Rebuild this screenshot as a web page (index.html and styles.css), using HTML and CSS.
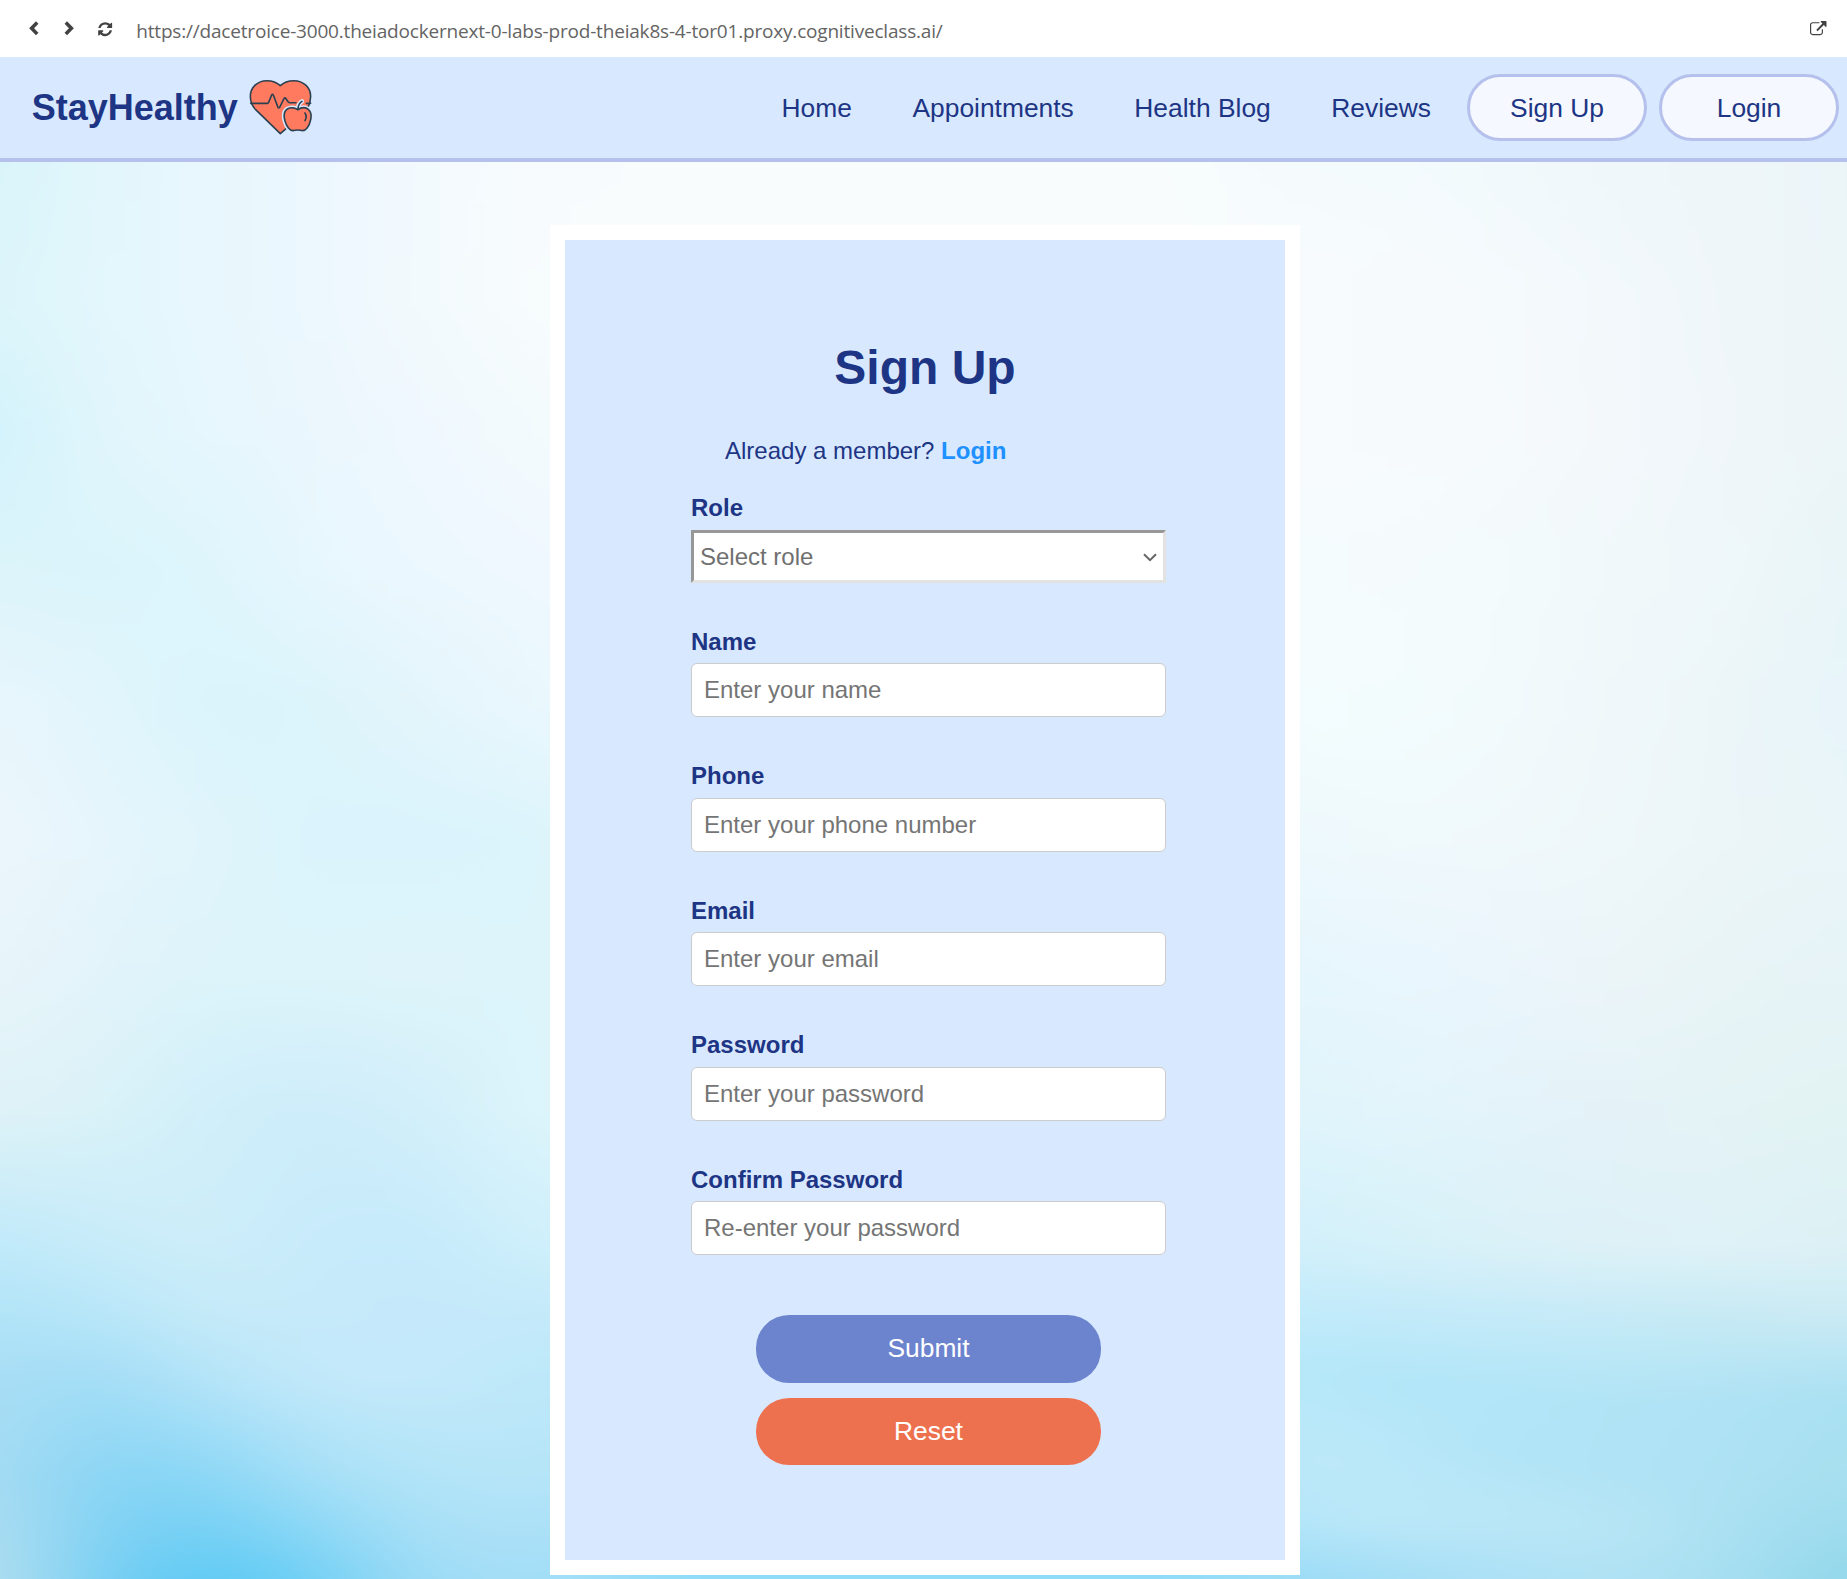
FILE: index.html
```html
<!DOCTYPE html>
<html lang="en">
<head>
<meta charset="utf-8">
<title>StayHealthy - Sign Up</title>
<link rel="stylesheet" href="styles.css">
</head>
<body>
<div class="toolbar">
  <svg class="tool tool-back" viewBox="0 0 10 15"><path d="M8.2 1.6 2.6 7.3l5.6 5.7" fill="none" stroke="#424242" stroke-width="3.5"/></svg>
  <svg class="tool tool-forward" viewBox="0 0 10 15"><path d="M1.8 1.6 7.4 7.3 1.8 13" fill="none" stroke="#424242" stroke-width="3.5"/></svg>
  <svg class="tool tool-refresh" viewBox="0 0 1792 1792"><path fill="#424242" d="M1639 1056q0 5-1 7-64 268-268 434.5t-478 166.5q-146 0-282.5-55t-243.5-157l-129 129q-19 19-45 19t-45-19-19-45v-448q0-26 19-45t45-19h448q26 0 45 19t19 45-19 45l-137 137q71 66 161 102t187 36q134 0 250-65t186-179q11-17 53-117 8-23 30-23h192q13 0 22.5 9.5t9.5 22.5zm25-800v448q0 26-19 45t-45 19h-448q-26 0-45-19t-19-45 19-45l138-138q-148-137-349-137-134 0-250 65t-186 179q-11 17-53 117-8 23-30 23h-199q-13 0-22.5-9.5t-9.5-22.5v-7q65-268 270-434.5t480-166.5q146 0 284 55.5t245 156.5l130-129q19-19 45-19t45 19 19 45z"/></svg>
  <span class="url">https://dacetroice-3000.theiadockernext-0-labs-prod-theiak8s-4-tor01.proxy.cognitiveclass.ai/</span>
  <svg class="tool tool-open" viewBox="0 0 1792 1792"><path fill="#424242" d="M1408 928v320q0 119-84.5 203.5t-203.5 84.5h-832q-119 0-203.5-84.5t-84.5-203.5v-832q0-119 84.5-203.5t203.5-84.5h704q14 0 23 9t9 23v64q0 14-9 23t-23 9h-704q-66 0-113 47t-47 113v832q0 66 47 113t113 47h832q66 0 113-47t47-113v-320q0-14 9-23t23-9h64q14 0 23 9t9 23zm384-864v512q0 26-19 45t-45 19-45-19l-176-176-652 652q-10 10-23 10t-23-10l-114-114q-10-10-10-23t10-23l652-652-176-176q-19-19-19-45t19-45 45-19h512q26 0 45 19t19 45z"/></svg>
</div>

<nav class="navbar">
  <a class="brand">StayHealthy
    <svg class="brand-icon" viewBox="56 42 190 170" fill="#ff7a5e" stroke="#2b4152" stroke-width="4.8" stroke-linejoin="round" stroke-linecap="round">
      <path d="M150 206 76 134C62 120 60 106 60 94 60 67 82 47 109 47c17 0 32 6 41 15 9-9 23-15 41-15 28 0 50 20 50 47 0 12-2 22-8 34l-62 60Z"/>
      <path fill="none" d="M61 115h50q3 0 4-3l9-22q3-4 5 0l14 37q2 4 5 0l13-26q3-5 6 0l7 10q2 2 5 2h18"/>
      <path stroke="#d8e9ff" fill="#d8e9ff" stroke-width="14" d="M203 134c-8-6-22-8-32-2-10 7-11 22-7 36 4 15 14 29 24 29 6 0 8-2 14-2s9 2 15 2c10 0 20-14 23-29 4-14 2-29-7-36-10-6-22-4-30 2Z"/>
      <path stroke="#d8e9ff" fill="none" stroke-width="13" d="M203 134q0-18 12-25"/>
      <path d="M203 134c-8-6-22-8-32-2-10 7-11 22-7 36 4 15 14 29 24 29 6 0 8-2 14-2s9 2 15 2c10 0 20-14 23-29 4-14 2-29-7-36-10-6-22-4-30 2Z"/>
      <path fill="none" d="M203 134q0-18 12-25M228 115h13M224 144q7 11 0 23"/>
    </svg>
  </a>
  <div class="links">
    <a class="link">Home</a>
    <a class="link">Appointments</a>
    <a class="link">Health Blog</a>
    <a class="link">Reviews</a>
  </div>
  <div class="nav-buttons">
    <button class="nav-button">Sign Up</button>
    <button class="nav-button">Login</button>
  </div>
</nav>

<main class="page">
  <svg class="backdrop" width="1847" height="1417" viewBox="0 162 1847 1417">
    <defs>
      <filter id="melt" filterUnits="userSpaceOnUse" x="-250" y="60" width="2350" height="1620" color-interpolation-filters="sRGB"><feGaussianBlur stdDeviation="56 10"/></filter>
      <linearGradient id="c1" gradientUnits="userSpaceOnUse" x1="0" y1="160" x2="0" y2="1579"><stop offset="0" stop-color="#d8f5f9"/><stop offset=".096" stop-color="#dcf5fa"/><stop offset=".19" stop-color="#d2f2fc"/><stop offset=".287" stop-color="#dcf4fa"/><stop offset=".383" stop-color="#e8f6fc"/><stop offset=".478" stop-color="#ecf6fc"/><stop offset=".574" stop-color="#e8f5fa"/><stop offset=".67" stop-color="#dff2f7"/><stop offset=".765" stop-color="#bfe9fa"/><stop offset=".81" stop-color="#b2e4f7"/><stop offset=".861" stop-color="#a8def5"/><stop offset=".925" stop-color="#a6dbf2"/><stop offset="1" stop-color="#b2dff0"/></linearGradient>
      <linearGradient id="c2" href="#c1"><stop offset="0" stop-color="#e3f6fc"/><stop offset=".096" stop-color="#e3f7fc"/><stop offset=".19" stop-color="#e2f6fb"/><stop offset=".287" stop-color="#daf4fb"/><stop offset=".383" stop-color="#e2f5fc"/><stop offset=".478" stop-color="#e6f5fc"/><stop offset=".574" stop-color="#e2f3fa"/><stop offset=".67" stop-color="#daf2f8"/><stop offset=".765" stop-color="#c8ecf9"/><stop offset=".81" stop-color="#b8e7f9"/><stop offset=".861" stop-color="#a0dcf6"/><stop offset=".925" stop-color="#88d5f5"/><stop offset="1" stop-color="#77cef3"/></linearGradient>
      <linearGradient id="c3" href="#c1"><stop offset="0" stop-color="#e8f7fd"/><stop offset=".096" stop-color="#e8f7fd"/><stop offset=".19" stop-color="#e6f7fe"/><stop offset=".287" stop-color="#def5fc"/><stop offset=".383" stop-color="#d9f4fc"/><stop offset=".478" stop-color="#e0f5fb"/><stop offset=".574" stop-color="#dcf4fa"/><stop offset=".67" stop-color="#d0effa"/><stop offset=".765" stop-color="#ceedf9"/><stop offset=".81" stop-color="#c8ebf8"/><stop offset=".861" stop-color="#b4e4f8"/><stop offset=".925" stop-color="#8bd7f6"/><stop offset="1" stop-color="#5ccaf4"/></linearGradient>
      <linearGradient id="c4" href="#c1"><stop offset="0" stop-color="#ecf7fe"/><stop offset=".096" stop-color="#ecf7fe"/><stop offset=".19" stop-color="#ebf6fd"/><stop offset=".287" stop-color="#e8f7fe"/><stop offset=".383" stop-color="#dcf4fb"/><stop offset=".478" stop-color="#daf3fc"/><stop offset=".574" stop-color="#ddf4fa"/><stop offset=".67" stop-color="#cdecfa"/><stop offset=".765" stop-color="#c7ebfb"/><stop offset=".81" stop-color="#c6eafa"/><stop offset=".861" stop-color="#c3e9fa"/><stop offset=".925" stop-color="#a8e0f7"/><stop offset="1" stop-color="#72d0f5"/></linearGradient>
      <linearGradient id="c5" href="#c1"><stop offset="0" stop-color="#f3fafe"/><stop offset=".096" stop-color="#f3fafd"/><stop offset=".19" stop-color="#eff8fe"/><stop offset=".287" stop-color="#ecf7fe"/><stop offset=".383" stop-color="#e4f5fb"/><stop offset=".478" stop-color="#daf3fc"/><stop offset=".574" stop-color="#dff4fa"/><stop offset=".67" stop-color="#d2effa"/><stop offset=".765" stop-color="#c5eafb"/><stop offset=".81" stop-color="#c5e9fa"/><stop offset=".861" stop-color="#c4e9fa"/><stop offset=".925" stop-color="#b4e5f8"/><stop offset="1" stop-color="#a0dcf5"/></linearGradient>
      <linearGradient id="c6" href="#c1"><stop offset="0" stop-color="#f8fbfe"/><stop offset=".096" stop-color="#f8fcfd"/><stop offset=".19" stop-color="#f4fbfd"/><stop offset=".287" stop-color="#eff8fe"/><stop offset=".383" stop-color="#eaf8fe"/><stop offset=".478" stop-color="#dcf4fb"/><stop offset=".574" stop-color="#dcf4fb"/><stop offset=".67" stop-color="#def5fb"/><stop offset=".765" stop-color="#d0f0fb"/><stop offset=".81" stop-color="#c5eafa"/><stop offset=".861" stop-color="#bce8f9"/><stop offset=".925" stop-color="#b8e5f8"/><stop offset="1" stop-color="#a4def7"/></linearGradient>
      <linearGradient id="c7" href="#c1"><stop offset="0" stop-color="#f8fcfd"/><stop offset=".2" stop-color="#f8fcfe"/><stop offset=".478" stop-color="#e8f7fd"/><stop offset=".67" stop-color="#dff4fb"/><stop offset=".861" stop-color="#b8e8fa"/><stop offset="1" stop-color="#8edcf8"/></linearGradient>
      <linearGradient id="c8" href="#c1"><stop offset="0" stop-color="#f4fbfd"/><stop offset=".096" stop-color="#f8fbfe"/><stop offset=".19" stop-color="#f8fbfe"/><stop offset=".287" stop-color="#f5fcfe"/><stop offset=".383" stop-color="#f4fdfe"/><stop offset=".478" stop-color="#eef9fd"/><stop offset=".574" stop-color="#e6f6fd"/><stop offset=".67" stop-color="#e0f4fb"/><stop offset=".765" stop-color="#d2f0fb"/><stop offset=".81" stop-color="#c2ebfb"/><stop offset=".85" stop-color="#b5e8fa"/><stop offset=".915" stop-color="#bfe9f9"/><stop offset=".955" stop-color="#b8e7f9"/><stop offset="1" stop-color="#9cdcf6"/></linearGradient>
      <linearGradient id="c9" href="#c1"><stop offset="0" stop-color="#f4fbfd"/><stop offset=".096" stop-color="#f7fafd"/><stop offset=".19" stop-color="#f7fafd"/><stop offset=".287" stop-color="#f5fbfd"/><stop offset=".383" stop-color="#f3fcfd"/><stop offset=".478" stop-color="#f0f9fc"/><stop offset=".574" stop-color="#e9f6fd"/><stop offset=".67" stop-color="#e3f5fb"/><stop offset=".765" stop-color="#d6f1f9"/><stop offset=".81" stop-color="#c4eaf9"/><stop offset=".861" stop-color="#b1e6f8"/><stop offset=".925" stop-color="#bae8f9"/><stop offset=".96" stop-color="#bce8f8"/><stop offset="1" stop-color="#a4def6"/></linearGradient>
      <linearGradient id="c10" href="#c1"><stop offset="0" stop-color="#f1f9fc"/><stop offset=".096" stop-color="#f5fafd"/><stop offset=".19" stop-color="#f6fafc"/><stop offset=".287" stop-color="#f3fbfc"/><stop offset=".383" stop-color="#f2fafc"/><stop offset=".478" stop-color="#f0f8fb"/><stop offset=".574" stop-color="#eaf5fc"/><stop offset=".67" stop-color="#e4f3fa"/><stop offset=".765" stop-color="#dbf1f8"/><stop offset=".81" stop-color="#c7ebf9"/><stop offset=".861" stop-color="#b3e6f8"/><stop offset=".91" stop-color="#b0e4f7"/><stop offset=".955" stop-color="#bbe7f7"/><stop offset="1" stop-color="#aee1f6"/></linearGradient>
      <linearGradient id="c11" href="#c1"><stop offset="0" stop-color="#eff7fa"/><stop offset=".096" stop-color="#f2f8fb"/><stop offset=".19" stop-color="#f3f8fb"/><stop offset=".287" stop-color="#f1f8fa"/><stop offset=".383" stop-color="#f0f7fa"/><stop offset=".478" stop-color="#eef7f9"/><stop offset=".574" stop-color="#ecf5f8"/><stop offset=".67" stop-color="#e4f2f8"/><stop offset=".765" stop-color="#def1f7"/><stop offset=".81" stop-color="#c8ebf7"/><stop offset=".875" stop-color="#b0e4f5"/><stop offset=".925" stop-color="#afe3f5"/><stop offset=".965" stop-color="#b8e6f5"/><stop offset="1" stop-color="#b0e2f4"/></linearGradient>
      <linearGradient id="c12" href="#c1"><stop offset="0" stop-color="#eff6fa"/><stop offset=".19" stop-color="#f0f6fa"/><stop offset=".287" stop-color="#eff7fa"/><stop offset=".383" stop-color="#ecf6f9"/><stop offset=".478" stop-color="#ecf5f8"/><stop offset=".574" stop-color="#e8f4f6"/><stop offset=".67" stop-color="#e4f3f5"/><stop offset=".765" stop-color="#dff2f7"/><stop offset=".82" stop-color="#c4e9f4"/><stop offset=".875" stop-color="#afe2f5"/><stop offset=".94" stop-color="#ade1f3"/><stop offset="1" stop-color="#a7dff1"/></linearGradient>
      <linearGradient id="c13" href="#c1"><stop offset="0" stop-color="#ebf5f8"/><stop offset=".19" stop-color="#ecf5f8"/><stop offset=".287" stop-color="#e8f5f7"/><stop offset=".383" stop-color="#e7f4f9"/><stop offset=".478" stop-color="#e9f5f8"/><stop offset=".574" stop-color="#e6f3f7"/><stop offset=".67" stop-color="#e2f3f3"/><stop offset=".765" stop-color="#dcf0f5"/><stop offset=".81" stop-color="#cdebf4"/><stop offset=".87" stop-color="#aae1f2"/><stop offset=".93" stop-color="#a6dfef"/><stop offset="1" stop-color="#92d7eb"/></linearGradient>
    </defs>
    <g filter="url(#melt)">
      <rect x="-250" y="60" width="312" height="1620" fill="url(#c1)"/>
      <rect x="52" y="60" width="115" height="1620" fill="url(#c2)"/>
      <rect x="157" y="60" width="116" height="1620" fill="url(#c3)"/>
      <rect x="263" y="60" width="115" height="1620" fill="url(#c4)"/>
      <rect x="368" y="60" width="125" height="1620" fill="url(#c5)"/>
      <rect x="483" y="60" width="147" height="1620" fill="url(#c6)"/>
      <rect x="620" y="60" width="620" height="1620" fill="url(#c7)"/>
      <rect x="1230" y="60" width="132" height="1620" fill="url(#c8)"/>
      <rect x="1352" y="60" width="115" height="1620" fill="url(#c9)"/>
      <rect x="1457" y="60" width="115" height="1620" fill="url(#c10)"/>
      <rect x="1562" y="60" width="115" height="1620" fill="url(#c11)"/>
      <rect x="1667" y="60" width="126" height="1620" fill="url(#c12)"/>
      <rect x="1783" y="60" width="317" height="1620" fill="url(#c13)"/>
    </g>
  </svg>

  <section class="card">
    <h1 class="title">Sign Up</h1>
    <p class="member">Already a member? <a class="member-link">Login</a></p>
    <form class="form">
      <div class="group">
        <label class="label" for="role">Role</label>
        <div class="select-box">
          <select class="select" id="role"><option>Select role</option></select>
          <svg class="caret" viewBox="0 0 14 9"><path d="M1 1.2 7 7.2 13 1.2" fill="none" stroke="#666" stroke-width="2"/></svg>
        </div>
      </div>
      <div class="group">
        <label class="label" for="name">Name</label>
        <input class="input" id="name" type="text" placeholder="Enter your name">
      </div>
      <div class="group">
        <label class="label" for="phone">Phone</label>
        <input class="input" id="phone" type="tel" placeholder="Enter your phone number">
      </div>
      <div class="group">
        <label class="label" for="email">Email</label>
        <input class="input" id="email" type="email" placeholder="Enter your email">
      </div>
      <div class="group">
        <label class="label" for="password">Password</label>
        <input class="input" id="password" type="password" placeholder="Enter your password">
      </div>
      <div class="group">
        <label class="label" for="confirm">Confirm Password</label>
        <input class="input" id="confirm" type="password" placeholder="Re-enter your password">
      </div>
      <div class="actions">
        <button class="action submit" type="submit">Submit</button>
        <button class="action reset" type="reset">Reset</button>
      </div>
    </form>
  </section>
</main>
</body>
</html>
```
FILE: styles.css
```css
* { box-sizing: border-box; }

body {
  margin: 0;
  height: 1579px;
  overflow: hidden;
  display: flex;
  flex-direction: column;
  font-family: "Liberation Sans", Arial, sans-serif;
  color: #1d3584;
}

.toolbar {
  flex: none;
  height: 57px;
  background: #fff;
  display: flex;
  align-items: flex-start;
  padding: 21px 20.5px 0 29px;
}
.tool { flex: none; display: block; }
.tool-back { width: 10px; height: 15px; }
.tool-forward { width: 10px; height: 15px; margin-left: 24.5px; }
.tool-refresh { width: 16.3px; height: 16.3px; margin-left: 23.2px; }
.tool-open { width: 16.5px; height: 16.5px; margin-left: auto; }
.url {
  font-family: "Open Sans", "Noto Sans", sans-serif;
  font-size: 19px;
  line-height: 20px;
  letter-spacing: -0.19px;
  color: #646464;
  margin-left: 23.3px;
  white-space: nowrap;
}

.navbar {
  flex: none;
  height: 105px;
  background: #d8e9ff;
  border-bottom: 4px solid #b5c1ec;
  display: flex;
  align-items: center;
  padding: 0 8px 0 31.7px;
}
.brand {
  display: flex;
  align-items: center;
  gap: 11px;
  font-size: 36px;
  font-weight: bold;
}
.brand-icon { width: 63.3px; height: 56.7px; }
.links { display: flex; gap: 60.5px; margin-left: auto; padding-top: 1px; }
.link { font-size: 26.4px; }
.nav-buttons { display: flex; gap: 12px; margin-left: 36px; }
.nav-button {
  width: 180px;
  height: 67px;
  border: 3px solid #b5c1ec;
  border-radius: 34px;
  background: #f5f8ff;
  color: inherit;
  font: 26.4px "Liberation Sans", Arial, sans-serif;
  padding: 1px 0 0;
}

.page {
  flex: 1;
  position: relative;
  display: flex;
  justify-content: center;
  align-items: flex-start;
  overflow: hidden;
}
.backdrop { position: absolute; top: 0; left: 0; }

.card {
  position: relative;
  width: 750px;
  height: 1350px;
  margin: 63px 0 0 3px;
  border: 15px solid #fff;
  background: #d8e9ff;
  padding: 100px 119px 0 126px;
}
.title {
  margin: 0 -119px 0 -126px;
  text-align: center;
  font-size: 48px;
  line-height: 56px;
}
.member {
  margin: 41px 0 0 34px;
  font-size: 24px;
  line-height: 28px;
}
.member-link { color: #1e90ff; font-weight: bold; }

.form { margin-top: 29.2px; }
.group {
  display: flex;
  flex-direction: column;
  gap: 7.5px;
  margin-bottom: 45px;
}
.label { font-size: 24px; line-height: 28px; font-weight: bold; }
.select-box { display: grid; align-items: center; height: 53px; }
.select {
  grid-area: 1 / 1;
  width: 100%;
  height: 53px;
  appearance: none;
  border: 3px solid;
  border-color: #979797 #e2e2e2 #e2e2e2 #979797;
  border-radius: 0;
  background: #fff;
  color: #707070;
  font: 24px "Liberation Sans", Arial, sans-serif;
  padding: 0 6px;
}
.caret {
  grid-area: 1 / 1;
  justify-self: end;
  width: 14px;
  height: 9px;
  margin: 2px 9.5px 0 0;
}
.input {
  width: 100%;
  height: 54px;
  border: 1px solid #ccc;
  border-radius: 6px;
  background: #fff;
  font: 24px "Liberation Sans", Arial, sans-serif;
  padding: 0 12px;
}
.input::placeholder { color: #757575; }

.actions {
  display: flex;
  flex-direction: column;
  align-items: center;
  gap: 15px;
  margin-top: 59.6px;
}
.action {
  width: 345px;
  border: 0;
  border-radius: 33px;
  color: #fff;
  font: 26.4px "Liberation Sans", Arial, sans-serif;
}
.submit { height: 68px; background: #6c83ce; }
.reset { height: 67px; background: #ee714f; }
.group:nth-last-child(2) { margin-bottom: 0; }
```
